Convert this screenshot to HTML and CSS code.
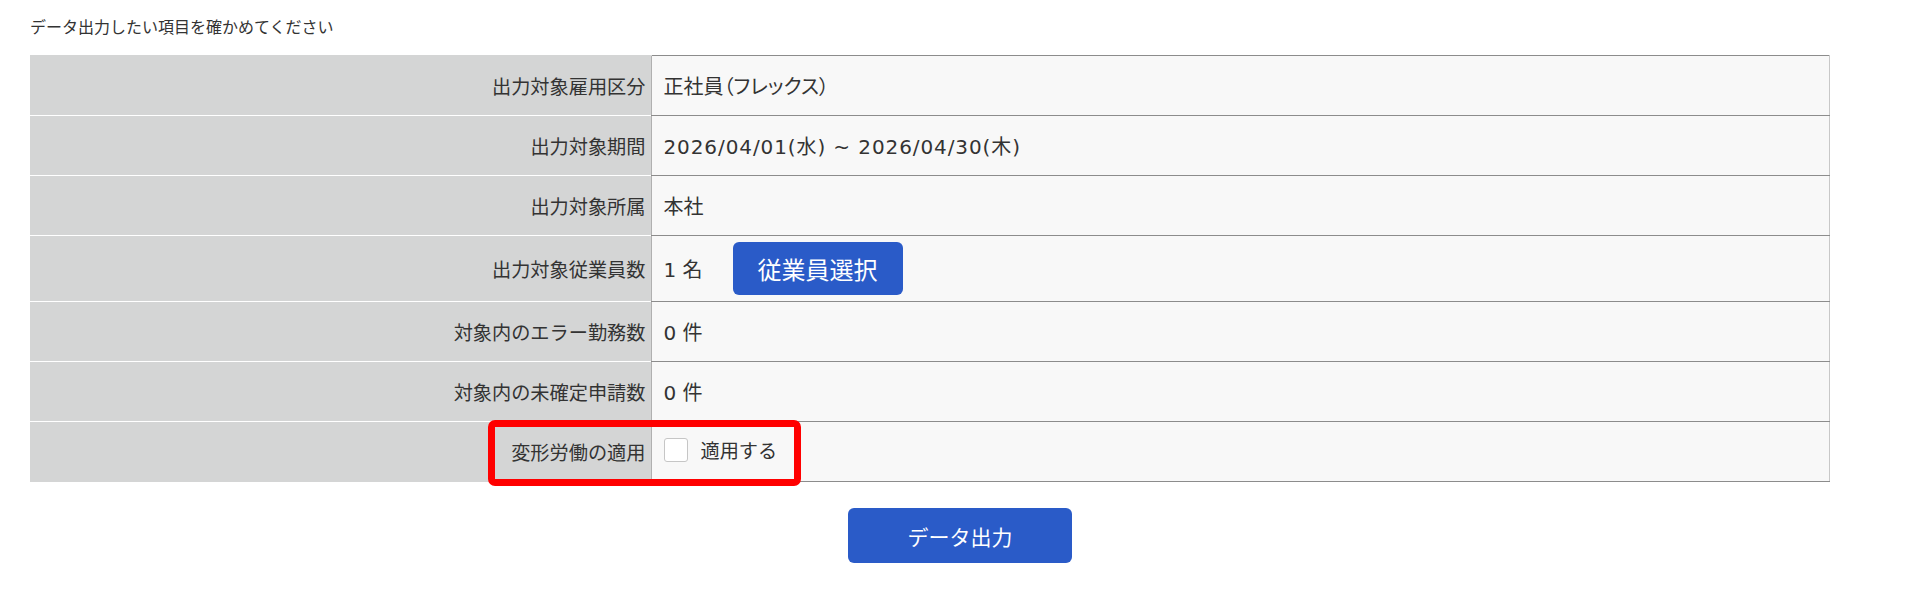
FILE: index.html
```html
<!DOCTYPE html>
<html lang="ja">
<head>
    <meta charset="UTF-8">
    <title>データ出力</title>
    <link rel="stylesheet" href="styles.css">
</head>
<body>
    <div class="container">
        <p class="lead">データ出力したい項目を確かめてください</p>

        <div class="confirm">
            <table class="confirm-table">
                <tr>
                    <th>出力対象雇用区分</th>
                    <td class="kana">正社員（フレックス）</td>
                </tr>
                <tr>
                    <th>出力対象期間</th>
                    <td class="period">2026/04/01(水) ~ 2026/04/30(木)</td>
                </tr>
                <tr>
                    <th>出力対象所属</th>
                    <td>本社</td>
                </tr>
                <tr class="tall">
                    <th>出力対象従業員数</th>
                    <td>
                        <div class="cell-flex">
                            <span>1 名</span>
                            <button class="btn btn-select">従業員選択</button>
                        </div>
                    </td>
                </tr>
                <tr>
                    <th>対象内のエラー勤務数</th>
                    <td>0 件</td>
                </tr>
                <tr>
                    <th>対象内の未確定申請数</th>
                    <td>0 件</td>
                </tr>
                <tr>
                    <th>変形労働の適用</th>
                    <td>
                        <label class="check">
                            <input type="checkbox">
                            <span>適用する</span>
                        </label>
                    </td>
                </tr>
            </table>

            <!-- marker drawn over the last row -->
            <div class="highlight"></div>
        </div>

        <div class="actions">
            <button class="btn btn-output">データ出力</button>
        </div>
    </div>
</body>
</html>
```

FILE: styles.css
```css
body {
    margin: 0;
    font-family: "DejaVu Sans", "Noto Sans CJK JP", sans-serif;
    color: #333;
    background-color: #fff;
}

.container {
    padding: 14px 30px 0;
}

.lead {
    margin: 0 0 14px;
    font-size: 16px;
    line-height: 27px;
}

.confirm {
    position: relative;
    width: 1800px;
}

.confirm-table {
    width: 100%;
    border-collapse: collapse;
    font-size: 19.2px;
}

.confirm-table th,
.confirm-table td {
    height: 60px;
    padding: 0;
    box-sizing: border-box;
}

.confirm-table th {
    width: 621px;
    padding-right: 5px;
    text-align: right;
    font-weight: normal;
    background-color: #d4d5d5;
    border-top: 1px solid #fff;
}

.confirm-table tr:first-child th {
    border-top-color: #d4d5d5;
}

.confirm-table td {
    padding-left: 12px;
    text-align: left;
    font-size: 20px;
    background-color: #f8f8f8;
    border-top: 1px solid #8c8c8c;
    border-bottom: 1px solid #8c8c8c;
    border-left: 1px solid #b0b0b0;
    border-right: 1px solid #c8c8c8;
}

.confirm-table tr.tall th,
.confirm-table tr.tall td {
    height: 66px;
}

.kana {
    font-feature-settings: "palt";
}

.period {
    letter-spacing: 0.9px;
}

.cell-flex {
    display: flex;
    align-items: center;
    gap: 30px;
}

.btn {
    border: none;
    border-radius: 6px;
    background-color: #2a5bc8;
    color: #fff;
    font-family: "Noto Sans CJK JP", sans-serif;
    cursor: pointer;
}

.btn-select {
    width: 170px;
    height: 53px;
    font-size: 24px;
}

.check {
    display: inline-flex;
    align-items: center;
    gap: 13px;
    font-size: 19.2px;
}

.check input {
    appearance: none;
    width: 24px;
    height: 24px;
    margin: 0;
    border: 1px solid #c6c6c6;
    border-radius: 3px;
    background-color: #fff;
}

.highlight {
    position: absolute;
    left: 458px;
    top: 365px;
    width: 313px;
    height: 66px;
    box-sizing: border-box;
    border: 7px solid #ff0000;
    border-radius: 7px;
    pointer-events: none;
}

.actions {
    display: flex;
    justify-content: center;
    margin: 26px -30px 0;
}

.btn-output {
    width: 224px;
    height: 55px;
    font-size: 21px;
}
```
